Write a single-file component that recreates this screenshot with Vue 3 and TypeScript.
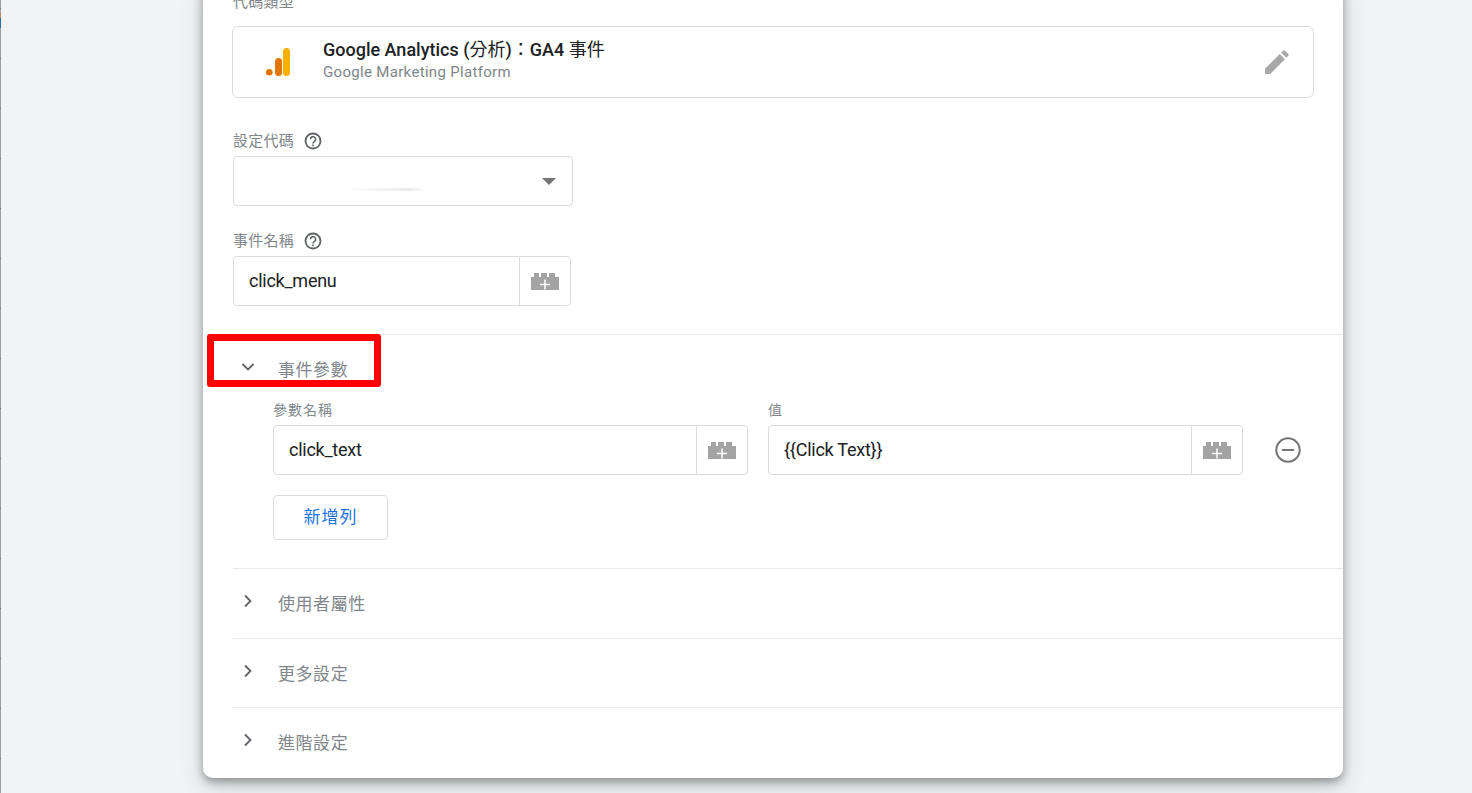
<script setup lang="ts">
const collapsed: string[] = ['使用者屬性', '更多設定', '進階設定']
const params = [
  { label: '參數名稱', value: 'click_text', cls: 'fname' },
  { label: '值', value: '{{Click Text}}', cls: 'fval' },
]
</script>

<template>
  <div class="page">
    <div class="edge"></div>
    <main class="panel">
      <div class="inner">
        <div class="lbl type-lbl">代碼類型</div>
        <div class="type-card">
          <svg class="ga" width="24" height="28" viewBox="0 0 24 28">
            <rect x="17" y="0" width="7" height="28" rx="3.500" fill="#fbb000" />
            <rect x="9" y="10" width="7" height="18" rx="3.500" fill="#e37400" />
            <circle cx="3.300" cy="24.300" r="3.300" fill="#e37400" />
          </svg>
          <div class="type-text">
            <div class="type-title">Google Analytics (<span class="thin">分析</span>)<span class="thin">：</span>GA4 <span class="thin">事件</span></div>
            <div class="type-sub">Google Marketing Platform</div>
          </div>
          <svg class="pencil" width="24" height="24" viewBox="0 0 24 24">
            <path fill="#a8a8a8" d="M0 24v-5.200L14.700 4.100l5.200 5.200L5.200 24H0zM16.200 2.600 18.200.7a1.300 1.300 0 0 1 1.800 0l3.300 3.300a1.300 1.300 0 0 1 0 1.800l-2 1.900z" />
          </svg>
        </div>

        <div class="lbl field-lbl first">設定代碼 <svg class="help" width="18" height="18" viewBox="0 0 18 18"><circle cx="9" cy="9" r="7.500" fill="none" stroke="#5f6368" stroke-width="1.800" /><path d="M6.400 7.200a2.600 2.600 0 1 1 4.300 2c-.9.700-1.700 1.200-1.700 2.400" fill="none" stroke="#5f6368" stroke-width="1.600" /><rect x="8.200" y="12.500" width="1.600" height="1.700" fill="#5f6368" /></svg></div>
        <div class="select">
          <span class="blur"></span>
          <span class="caret"></span>
        </div>

        <div class="lbl field-lbl second">事件名稱 <svg class="help" width="18" height="18" viewBox="0 0 18 18"><circle cx="9" cy="9" r="7.500" fill="none" stroke="#5f6368" stroke-width="1.800" /><path d="M6.400 7.200a2.600 2.600 0 1 1 4.300 2c-.9.700-1.700 1.200-1.700 2.400" fill="none" stroke="#5f6368" stroke-width="1.600" /><rect x="8.200" y="12.500" width="1.600" height="1.700" fill="#5f6368" /></svg></div>
        <div class="input-group event-name">
          <div class="input-value">click_menu</div>
          <div class="brick-btn">
            <svg width="28" height="17" viewBox="0 0 28 17"><path fill="#a3a3a3" d="M0 17V4h3V0h5v4h2V0h6v4h2V0h6v4h4v13z" /><path stroke="#fff" stroke-width="1.500" d="M14 6.500v10M9 11.500h10" /></svg>
          </div>
        </div>
      </div>

      <section class="sec open">
        <div class="sec-head">
          <svg class="chev" width="14" height="14" viewBox="0 0 14 14"><path d="M1.500 4 7 9.500 12.500 4" fill="none" stroke="#5f6368" stroke-width="1.800" /></svg>
          <span class="sec-title">事件參數</span>
        </div>
        <div class="param-row">
          <div v-for="p in params" :key="p.label" class="param" :class="p.cls">
            <div class="lbl param-lbl">{{ p.label }}</div>
            <div class="input-group">
              <div class="input-value">{{ p.value }}</div>
              <div class="brick-btn">
                <svg width="28" height="17" viewBox="0 0 28 17"><path fill="#a3a3a3" d="M0 17V4h3V0h5v4h2V0h6v4h2V0h6v4h4v13z" /><path stroke="#fff" stroke-width="1.500" d="M14 6.500v10M9 11.500h10" /></svg>
              </div>
            </div>
          </div>
          <svg class="minus" width="26" height="26" viewBox="0 0 26 26"><circle cx="13" cy="13" r="11.700" fill="none" stroke="#757575" stroke-width="2" /><path d="M7 13h12" stroke="#757575" stroke-width="2" /></svg>
        </div>
        <button class="add-row" type="button">新增列</button>
      </section>

      <section v-for="s in collapsed" :key="s" class="sec closed">
        <div class="sec-head">
          <svg class="chev" width="14" height="14" viewBox="0 0 14 14"><path d="M4 1.500 9.500 7 4 12.500" fill="none" stroke="#5f6368" stroke-width="1.800" /></svg>
          <span class="sec-title">{{ s }}</span>
        </div>
      </section>
    </main>
    <div class="highlight"></div>
  </div>
</template>

<style>
html, body { margin: 0; background: #f0f1f4; }
</style>

<style scoped>
.page {
  position: relative;
  height: 793px;
  overflow: hidden;
  background: #f1f3f5;
  padding-left: 203px;
  box-sizing: border-box;
  font-family: Roboto, "Noto Sans CJK TC", sans-serif;
}
.edge {
  position: absolute;
  left: 0; top: 0; bottom: 0;
  width: 1px;
  background: repeating-linear-gradient(180deg, #9c9ea1 0 8px, #74777b 8px 9px, #9c9ea1 9px 50px);
}
.edge::after {
  content: "";
  position: absolute;
  left: 0; top: 13px;
  width: 1px; height: 15px;
  background: linear-gradient(180deg, #c08a5a 0 30%, #1f6fb0 30% 100%);
}
.panel {
  width: 1140px;
  height: 798px;
  margin-top: -20px;
  background: #fff;
  border-radius: 0 0 10px 10px;
  box-shadow: 0 4px 8px rgba(60,64,67,.45), 0 8px 24px rgba(60,64,67,.2);
  box-sizing: border-box;
  padding-top: 12px;
}
.inner { padding-left: 30px; }
.lbl { color: #80868b; font-size: 15px; letter-spacing: .25px; line-height: 20px; display: flex; align-items: center; }
.type-lbl { height: 20px; margin-bottom: 14px; }
.type-card {
  width: 1082px;
  height: 72px;
  margin-left: -1px;
  box-sizing: border-box;
  border: 1px solid #dadce0;
  border-radius: 6px;
  display: flex;
  align-items: center;
  padding: 0 24px 0 33px;
}
.ga { margin-right: 33px; }
.type-text { flex: 1; }
.type-title { font-size: 18px; font-weight: 500; color: #202124; line-height: 24px; margin-top: -4px; }
.thin { font-weight: 400; }
.type-sub { font-size: 15px; color: #80868b; line-height: 20px; letter-spacing: .32px; }
.field-lbl.first { margin-top: 33px; }
.field-lbl.second { margin-top: 25px; }
.field-lbl { height: 20px; margin-bottom: 5px; }
.help { margin-left: 10px; }
.select {
  width: 340px;
  height: 50px;
  box-sizing: border-box;
  border: 1px solid #dadce0;
  border-radius: 4px;
  display: flex;
  align-items: center;
  justify-content: space-between;
  padding: 0 16px 0 112px;
}
.blur { width: 80px; height: 3px; background: linear-gradient(90deg, #fff, #f1f3f4 40%, #e8eaed 80%, #fff); margin-top: 16px; }
.caret { width: 0; height: 0; border-left: 7px solid transparent; border-right: 7px solid transparent; border-top: 7px solid #757575; }
.input-group {
  height: 50px;
  box-sizing: border-box;
  border: 1px solid #dadce0;
  border-radius: 4px;
  display: flex;
  align-items: stretch;
}
.event-name { width: 338px; }
.input-value {
  flex: 1;
  font-size: 18px;
  color: #202124;
  line-height: 48px;
  padding-left: 15px;
  letter-spacing: -.25px;
}
.brick-btn {
  width: 51px;
  flex: none;
  border-left: 1px solid #dadce0;
  box-sizing: border-box;
  display: flex;
  align-items: center;
  justify-content: center;
}
.sec { margin-left: 30px; border-top: 1px solid #e8eaed; }
.open { margin-top: 28px; height: 234px; margin-left: 30px; box-sizing: border-box; }
.sec-head { display: flex; align-items: center; height: 66px; padding-left: 8px; }
.chev { flex: none; margin-top: -3px; }
.sec-title { margin-left: 23px; font-size: 17px; letter-spacing: .55px; color: #80868b; }
.param-row { display: flex; align-items: flex-end; margin: 0 0 0 40px; }
.param { flex: none; }
.fname { width: 475px; margin-right: 20px; }
.fval { width: 475px; }
.param-lbl { font-size: 14px; letter-spacing: 1px; line-height: 18px; height: 18px; margin-bottom: 6px; }
.minus { margin: 0 0 12px 32px; }
.add-row {
  display: block;
  margin: 20px 0 0 40px;
  width: 115px;
  height: 45px;
  padding: 0 0 4px;
  background: #fff;
  border: 1px solid #dadce0;
  border-radius: 4px;
  color: #1a73e8;
  font: 17px Roboto, "Noto Sans CJK TC", sans-serif;
  letter-spacing: 1px;
}
.closed { height: 70px; box-sizing: border-box; }
.closed:nth-child(4) { height: 69px; }
.highlight {
  position: absolute;
  left: 207px;
  top: 334px;
  width: 174px;
  height: 53px;
  box-sizing: border-box;
  border: 7px solid #fe0000;
  border-radius: 3px;
}
</style>
